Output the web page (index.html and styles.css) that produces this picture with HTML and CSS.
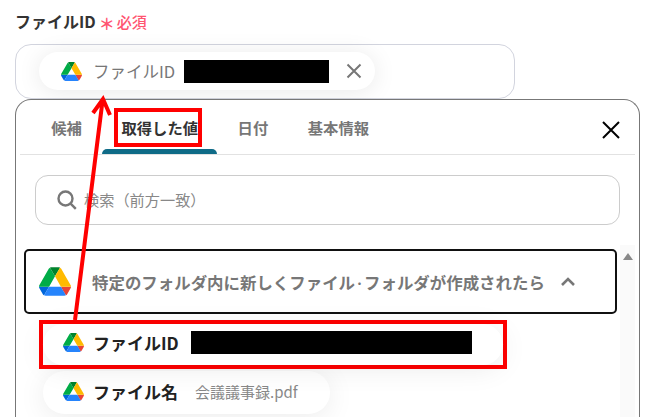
FILE: index.html
```html
<!DOCTYPE html>
<html lang="ja">
<head>
    <meta charset="UTF-8">
    <title>ファイルID</title>
    <link rel="stylesheet" href="styles.css">
</head>
<body>
    <svg class="defs" width="0" height="0">
        <symbol id="drive" viewBox="0 0 87.3 78">
            <path d="m6.6 66.85 3.85 6.65c.8 1.4 1.95 2.5 3.3 3.3l13.75-23.8h-27.5c0 1.55.4 3.1 1.2 4.5z" fill="#0066da"/>
            <path d="m43.65 25-13.75-23.8c-1.35.8-2.5 1.9-3.3 3.3l-25.4 44a9.06 9.06 0 0 0 -1.2 4.5h27.5z" fill="#00ac47"/>
            <path d="m73.55 76.8c1.35-.8 2.5-1.9 3.3-3.3l1.6-2.75 7.65-13.25c.8-1.4 1.2-2.95 1.2-4.5h-27.502l5.852 11.5z" fill="#ea4335"/>
            <path d="m43.65 25 13.75-23.8c-1.35-.8-2.9-1.2-4.5-1.2h-18.5c-1.6 0-3.15.45-4.5 1.2z" fill="#00832d"/>
            <path d="m59.8 53h-32.3l-13.75 23.8c1.35.8 2.9 1.2 4.5 1.2h50.8c1.6 0 3.15-.45 4.5-1.2z" fill="#2684fc"/>
            <path d="m73.4 26.5-12.7-22c-.8-1.4-1.95-2.5-3.3-3.3l-13.75 23.8 16.15 28h27.45c0-1.55-.4-3.1-1.2-4.5z" fill="#ffba00"/>
        </symbol>
    </svg>

    <div class="page">
        <!-- Field label -->
        <div class="field-label">
            <span>ファイルID</span>
            <span class="required"><span class="star">＊</span>必須</span>
        </div>

        <!-- Selected value -->
        <div class="field-input">
            <div class="selected-chip">
                <svg class="icon-small"><use href="#drive"/></svg>
                <span class="selected-name">ファイルID</span>
                <span class="masked masked-selected"></span>
                <svg class="chip-close" viewBox="0 0 16 16"><path d="M1.5 1.5l13 13M14.5 1.5l-13 13"/></svg>
            </div>
        </div>

        <!-- Picker panel -->
        <div class="panel">
            <div class="tabs">
                <div class="tab">候補</div>
                <div class="tab active">取得した値<span class="tab-mark"></span></div>
                <div class="tab">日付</div>
                <div class="tab">基本情報</div>
                <svg class="panel-close" viewBox="0 0 18 18"><path d="M1 1l16 16M17 1L1 17"/></svg>
            </div>

            <div class="search">
                <svg class="search-icon" viewBox="0 0 20 20"><circle cx="8.5" cy="8.5" r="7"/><path d="M13.6 13.6l5.2 5.2"/></svg>
                <span>検索（前方一致）</span>
            </div>

            <div class="list-area">
                <div class="list">
                    <div class="group">
                        <svg class="icon-large"><use href="#drive"/></svg>
                        <span class="group-title">特定のフォルダ内に新しくファイル<span class="dot">・</span>フォルダが作成されたら</span>
                        <svg class="chevron" viewBox="0 0 14 9"><path d="M1 8l6-6 6 6"/></svg>
                    </div>
                    <div class="highlight">
                        <div class="item item-full">
                            <svg class="icon-small"><use href="#drive"/></svg>
                            <span class="item-name">ファイルID</span>
                            <span class="masked masked-item"></span>
                        </div>
                    </div>
                    <div class="item item-second">
                        <svg class="icon-small"><use href="#drive"/></svg>
                        <span class="item-name">ファイル名</span>
                        <span class="item-value">会議議事録.pdf</span>
                    </div>
                </div>
                <div class="scrollbar"><span class="scroll-up"></span></div>
            </div>
        </div>

        <!-- Annotation arrow -->
        <svg class="arrow" viewBox="0 0 651 417">
            <path d="M75 320L102.5 101M93 113l10-14 7 16"/>
        </svg>
    </div>
</body>
</html>
```

FILE: styles.css
```css
*, *::before { box-sizing: border-box; margin: 0; padding: 0; }
html, body { height: 100%; overflow: hidden; background: white; }
body { font-family: "Noto Sans CJK JP", "Noto Sans", sans-serif; color: #333; }
.defs { display: block; height: 0; }

.page { height: 417px; padding: 11px 0 0 15px; overflow: hidden; position: relative; }

/* Label */
.field-label { display: flex; align-items: center; height: 20px; font-size: 16px; font-weight: 700; }
.required { display: flex; align-items: center; margin-left: 3px; color: #ff5470; font-size: 15px; font-weight: 500; }
.star { font-size: 16px; font-weight: 700; width: 18px; margin-top: 4px; }

/* Input with selected chip */
.field-input {
    width: 500px; height: 55px; margin-top: 13px; padding: 7px 0 0 23px;
    border: 1px solid #d2d4de; border-radius: 16px; background: white;
}
.selected-chip {
    display: flex; align-items: center; width: 336px; height: 38px; padding-left: 22px;
    border-radius: 19px; background: white; box-shadow: 0 2px 24px rgba(0, 0, 0, 0.09);
}
.icon-small { width: 21px; height: 19px; flex: none; }
.icon-large { width: 32px; height: 29px; flex: none; }
.selected-name { margin-left: 11px; font-size: 16.5px; color: #777; width: 91px; }
.masked { display: block; background: black; flex: none; }
.masked-selected { width: 145px; height: 23px; }
.chip-close { width: 16px; height: 16px; margin-left: 17px; fill: none; stroke: #777; stroke-width: 2; }

/* Panel */
.panel {
    width: 625px; height: 340px; border: 1px solid #777; border-bottom: none;
    border-radius: 16px 16px 0 0; background: white; position: relative;
}
.tabs {
    display: flex; gap: 1px; height: 55px; margin: 0 4px; padding-left: 12px;
    border-bottom: 1px solid #e2e2e2; position: relative;
}
.tab {
    display: flex; align-items: center; padding: 0 19.3px; font-size: 15.3px; font-weight: 700; color: #777;
    position: relative;
}
.tab.active { color: #333; }
.tab.active::before {
    content: ""; position: absolute; left: 12px; top: 8px; width: 88px; height: 39px;
    border: 4px solid #f00;
}
.tab-mark {
    position: absolute; left: 0; right: 0; bottom: 0; height: 5px;
    background: #0f6b87; border-radius: 5px 5px 0 0;
}
.panel-close {
    width: 18px; height: 18px; margin: 21px 15px 0 auto;
    fill: none; stroke: black; stroke-width: 2;
}

/* Search */
.search {
    display: flex; align-items: center; width: 585px; height: 50px; margin: 20px 0 0 19px;
    padding: 0 0 2px 21px; border: 1px solid #ccc; border-radius: 13px;
    font-size: 15.2px; color: #888;
}
.search-icon { width: 20px; height: 20px; margin: 2px 7px 0 0; fill: none; stroke: #777; stroke-width: 2.4; }

/* List */
.list-area { display: flex; height: 172px; margin-top: 20px; }
.list { width: 604px; padding: 4px 0 0 8px; }
.group {
    display: flex; align-items: center; width: 593px; height: 65px; padding-left: 13px;
    border: 2px solid #111; border-radius: 5px; background: white;
}
.group-title { margin-left: 21px; font-size: 16.45px; font-weight: 700; color: #777; white-space: nowrap; }
.dot { font-size: 9px; font-weight: 900; vertical-align: 2px; }
.chevron { width: 14px; height: 9px; margin-left: 16px; fill: none; stroke: #777; stroke-width: 2.6; }

.highlight { width: 468px; height: 49px; margin: 6px 0 0 15px; border: 4px solid #f00; position: relative; }
.item {
    display: flex; align-items: center; padding-left: 20px; border-radius: 22px;
    background: white; box-shadow: 0 4px 28px rgba(0, 0, 0, 0.08);
}
.item-full { width: 460px; height: 41px; padding-bottom: 5px; }
.item-second { width: 287px; height: 43px; margin: 2px 0 0 19px; padding-bottom: 3px; }
.item-name { width: 87px; margin-left: 9px; font-size: 17px; font-weight: 700; color: #222; white-space: nowrap; }
.masked-item { width: 281px; height: 23px; margin-left: 11px; }
.item-value { margin-left: 15px; font-size: 15px; color: #888; }

.scrollbar { width: 15px; background: #fafafa; display: flex; justify-content: center; padding-top: 8px; }
.scroll-up { width: 0; height: 0; border: 5px solid transparent; border-top: none; border-bottom: 7px solid #888; }

/* Annotation */
.arrow { position: absolute; left: 0; top: 0; width: 651px; height: 417px; fill: none; stroke: #f00; stroke-width: 4; }
```
